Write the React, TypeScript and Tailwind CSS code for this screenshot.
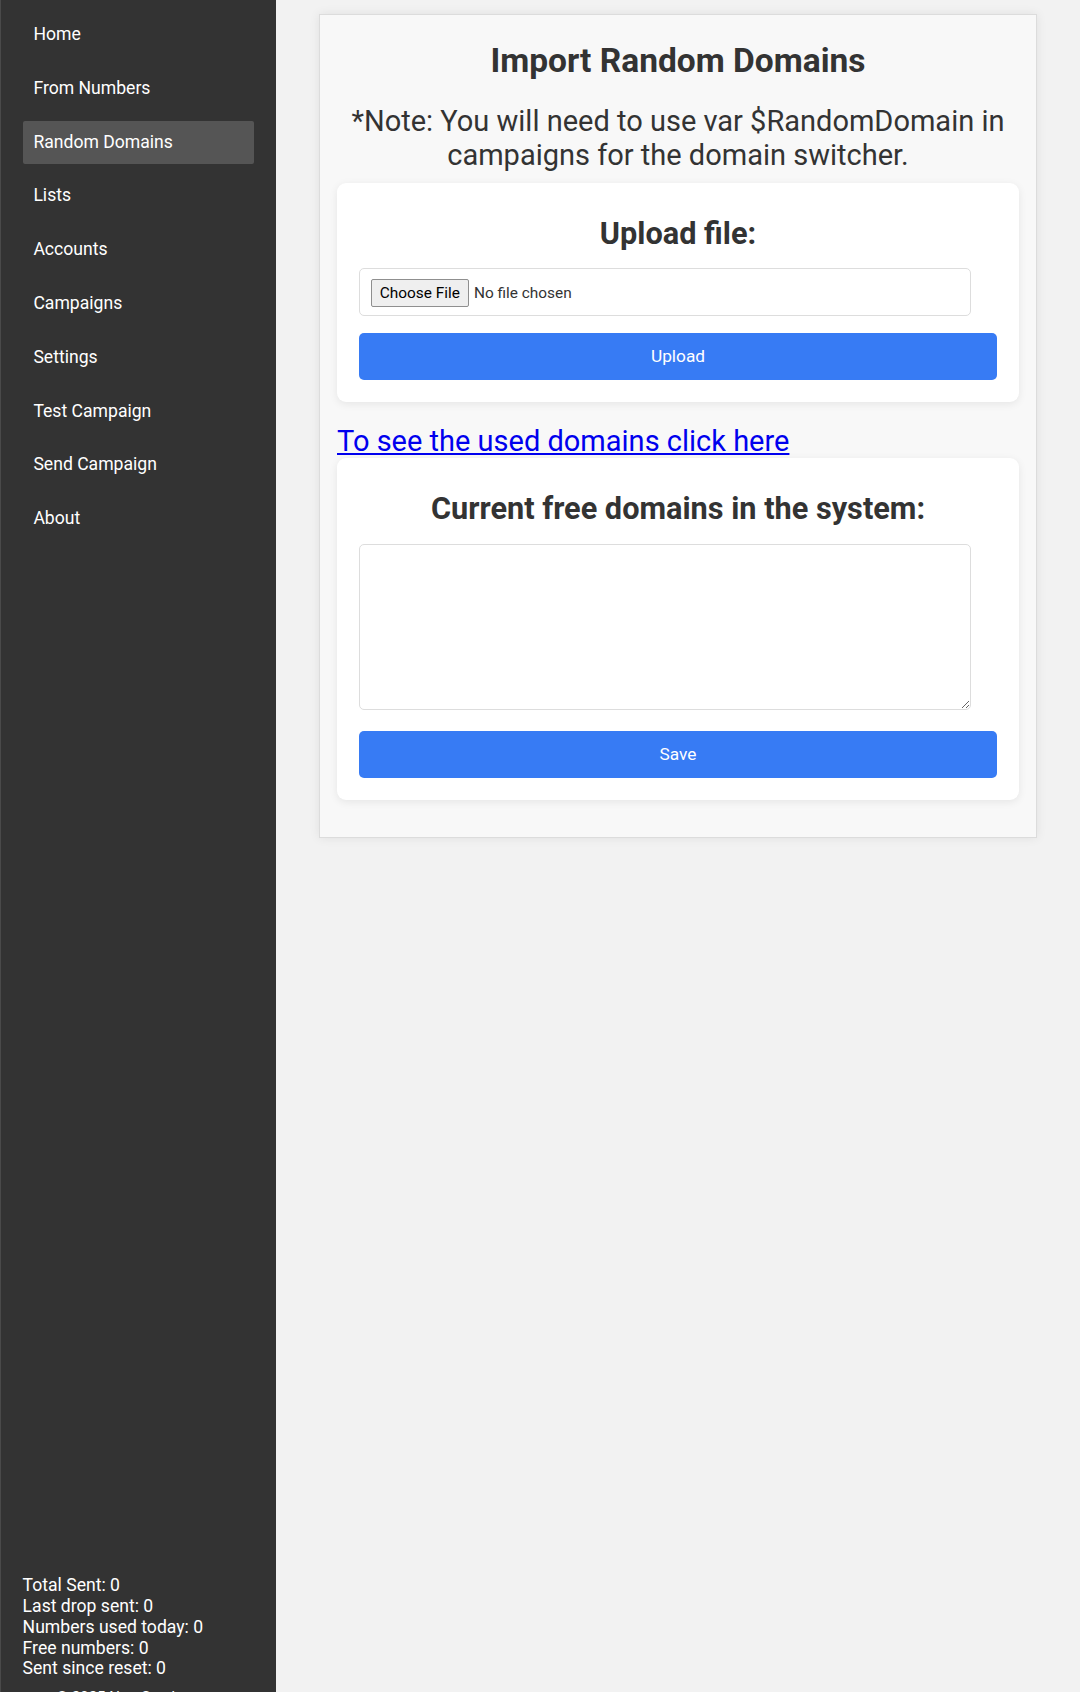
import React from "react";

const navItems = [
  "Home",
  "From Numbers",
  "Random Domains",
  "Lists",
  "Accounts",
  "Campaigns",
  "Settings",
  "Test Campaign",
  "Send Campaign",
  "About",
];

const stats = [
  "Total Sent: 0",
  "Last drop sent: 0",
  "Numbers used today: 0",
  "Free numbers: 0",
  "Sent since reset: 0",
];

const Sidebar = () => {
  return (
    <aside className="flex h-[1692px] w-[276px] shrink-0 flex-col border-l border-[#4a4a4a] bg-[#333333] px-[21.6px] text-white">
      {/* Navigation */}
      <ul className="flex flex-col gap-[10.8px] pt-[13px]">
        {navItems.map((item) => (
          <li key={item}>
            <a
              href="#"
              className={`block h-[43px] rounded-[2px] px-[10.8px] text-[17.6px] leading-[43px] ${
                item === "Random Domains" ? "bg-[#555555]" : ""
              }`}
            >
              {item}
            </a>
          </li>
        ))}
      </ul>

      {/* Stats */}
      <div className="mt-auto -mb-[14px]">
        <div className="text-[17.6px] leading-[20.7px]">
          {stats.map((s) => (
            <div key={s}>{s}</div>
          ))}
        </div>
        <p className="mt-[9px] text-center text-[15px] leading-[18px]">© 2025 NumSender.com</p>
      </div>
    </aside>
  );
};

const App = () => {
  return (
    <div className="flex h-[1692px] overflow-hidden font-['Roboto',sans-serif] text-[#333333]">
      <Sidebar />

      <main className="flex-1 bg-[#f2f2f2]">
        <div className="mx-auto mt-[14px] w-[718px] border border-[#dcdcdc] bg-[#f8f8f8] px-[17px] pt-[17px] pb-[37px] shadow-[0_0_10px_rgba(0,0,0,0.08)]">
          <h1 className="mt-[11px] text-center text-[33.5px] font-bold leading-[36px]">Import Random Domains</h1>
          <p className="mt-[25px] text-center text-[29px] leading-[34px]">
            *Note: You will need to use var $RandomDomain in campaigns for the domain switcher.
          </p>

          {/* Upload card */}
          <form className="mt-[11px] rounded-[9px] bg-white px-[22px] pt-[22px] pb-[22px] shadow-[0_2px_8px_rgba(0,0,0,0.08)]">
            <h3 className="mt-[12px] text-center text-[30.7px] font-bold leading-[34px]">Upload file:</h3>
            <input
              type="file"
              className="mt-[17px] block h-[48px] w-[96%] rounded-[5px] border border-[#dddddd] bg-white px-[10.8px] py-[10px] text-[15.4px] leading-[24px] text-[#333333] file:mr-[5px] file:rounded-[2px] file:border file:border-[#8f8f8f] file:bg-[#efefef] file:px-[8px] file:py-[1px] file:text-[15.4px] file:text-black"
            />
            <button
              type="button"
              className="mt-[17px] block h-[47px] w-full rounded-[5px] bg-[#377bf4] text-[17.3px] text-white"
            >
              Upload
            </button>
          </form>

          <div className="mt-[23px] text-[29px] leading-[32px]">
            <a href="#" className="text-[#0000ee] underline">
              To see the used domains click here
            </a>
          </div>

          {/* Free domains card */}
          <form className="mt-[1px] rounded-[9px] bg-white px-[22px] pt-[22px] pb-[22px] shadow-[0_2px_8px_rgba(0,0,0,0.08)]">
            <h3 className="mt-[12px] text-center text-[30.7px] font-bold leading-[34px]">
              Current free domains in the system:
            </h3>
            <textarea className="mt-[18px] block h-[166px] w-[96%] rounded-[5px] border border-[#dddddd] bg-white p-[10.8px] text-[15px]" />
            <button
              type="button"
              className="mt-[21px] block h-[47px] w-full rounded-[5px] bg-[#377bf4] text-[17.3px] text-white"
            >
              Save
            </button>
          </form>
        </div>
      </main>
    </div>
  );
};

export default App;
